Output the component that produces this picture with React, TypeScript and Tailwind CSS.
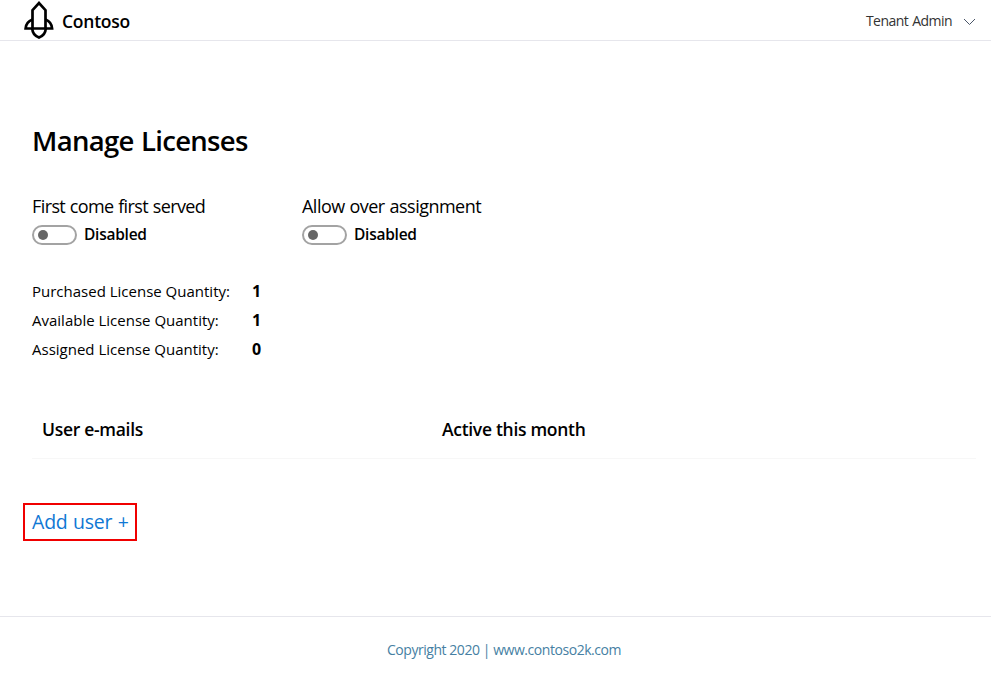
function Rocket() {
  return (
    <svg width="30" height="38" viewBox="0 0 30 38" fill="none" stroke="#000" strokeWidth="2.7">
      <path d="M8.500 27.500V9.200L15 2L21.500 9.200V27.500" />
      <path d="M8.500 18.500C4.500 20 1.900 23.400 1.600 27.500H28.100C27.800 23.400 25.200 20 21.500 18.500" />
      <path d="M8.300 28C8.500 32.500 11.500 35.200 15 36.600C18.500 35.200 21.500 32.500 21.700 28" />
    </svg>
  );
}

function Toggle({ label, labelClass }: { label: string; labelClass: string }) {
  return (
    <div className="w-[270px]">
      <div className={`h-6 text-[18px] leading-6 whitespace-nowrap ${labelClass}`}>{label}</div>
      <div className="mt-[6px] flex h-[21px] items-center gap-[7px]">
        <div className="flex h-5 w-[45px] items-center rounded-full border-2 border-[#a3a3a3] pl-1">
          <div className="size-[10px] rounded-full bg-[#666]" />
        </div>
        <span className="-mt-[2px] text-[15.500px] leading-5 font-semibold tracking-[-0.250px]">Disabled</span>
      </div>
    </div>
  );
}

const quantities: [string, string][] = [
  ["Purchased License Quantity:", "1"],
  ["Available License Quantity:", "1"],
  ["Assigned License Quantity:", "0"],
];

export default function App() {
  return (
    <div className="flex h-[681px] w-full flex-col overflow-hidden bg-white font-['Open_Sans','Noto_Sans',sans-serif] text-black">
      <header className="flex h-[41px] shrink-0 items-center justify-between border-b border-[#e6e6ec] pr-[15px] pl-6">
        <div className="flex items-center gap-2">
          <Rocket />
          <span className="pt-px text-[17.500px] leading-6 font-semibold tracking-[-0.250px]">Contoso</span>
        </div>
        <div className="flex items-center gap-[11px] text-[#333]">
          <span className="pt-px text-[14px] leading-5 tracking-[-0.550px] [word-spacing:1px]">Tenant Admin</span>
          <svg className="mt-[3px]" width="13" height="8" viewBox="0 0 13 8" fill="none" stroke="#4a5568" strokeWidth="1">
            <path d="M1 1L6.500 6.500L12 1" />
          </svg>
        </div>
      </header>

      <main className="h-[575px] shrink-0 px-8 pt-[80px] pr-[15px]">
        <h1 className="h-10 text-[27.500px] leading-10 font-semibold tracking-[-0.700px] [word-spacing:1px]">Manage Licenses</h1>
        <div className="mt-[33px] flex">
          <Toggle label="First come first served" labelClass="tracking-[-0.600px] [word-spacing:0.500px]" />
          <Toggle label="Allow over assignment" labelClass="tracking-[-0.520px] [word-spacing:0.700px]" />
        </div>
        <dl className="mt-8 text-[15px] leading-[29px]">
          {quantities.map(([name, value]) => (
            <div key={name} className="flex h-[29px]">
              <dt className="w-[220px] whitespace-nowrap">{name}</dt>
              <dd className="text-[16px] font-bold">{value}</dd>
            </div>
          ))}
        </dl>
        <div className="mt-[36px] flex h-[59px] border-b border-[#f7f7f7] pl-[10px] text-[17.500px] leading-[59px] font-semibold tracking-[-0.300px]">
          <div className="w-[400px]">User e-mails</div>
          <div>Active this month</div>
        </div>
        <button className="mt-11 -ml-[9px] flex h-[38px] w-[114px] items-center border-2 border-[#f00000] pl-[7px] text-[19.500px] tracking-[-0.200px] whitespace-nowrap text-[#0f78d4] [word-spacing:0.500px]">
          Add user +
        </button>
      </main>

      <footer className="flex h-[65px] shrink-0 items-center justify-center border-t border-[#e6e6ec] pt-px pl-[17px] text-[14px] leading-5 tracking-[-0.450px] text-[#467fa3]">
        <span>Copyright 2020 | www.contoso2k.com</span>
      </footer>
    </div>
  );
}
